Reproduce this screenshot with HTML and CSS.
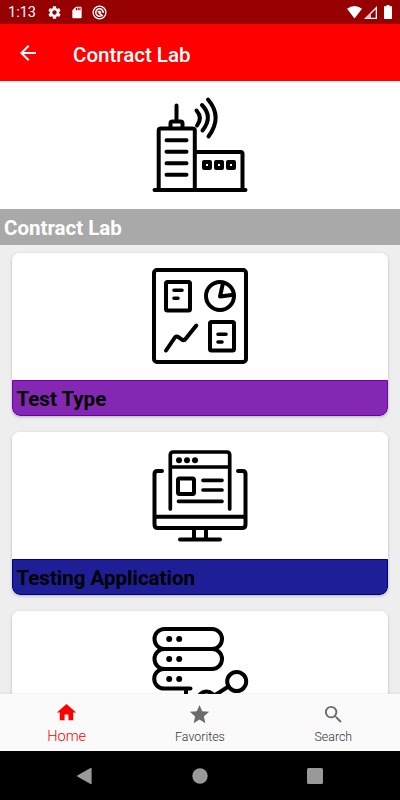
FILE: index.html
```html
<!DOCTYPE html>
<html lang="en">
<head>
    <meta charset="UTF-8">
    <meta name="viewport" content="width=device-width, initial-scale=1.0">
    <title>Contract Lab</title>
    <link rel="stylesheet" href="styles.css">
</head>
<body>
    <div class="phone">
        <!-- Status bar -->
        <div class="status-bar">
            <span class="clock">1:13</span>
            <svg class="status-icon gear" viewBox="0 0 24 24"><path d="M19.4 13a7.500 7.500 0 0 0 0-2l2.100-1.650c.2-.15.25-.42.12-.64l-2-3.460c-.12-.22-.38-.3-.6-.22l-2.500 1a7.300 7.300 0 0 0-1.700-.98l-.38-2.650A.5.5 0 0 0 14 2h-4a.5.5 0 0 0-.5.42l-.37 2.650c-.6.25-1.170.58-1.700.98l-2.480-1a.5.5 0 0 0-.6.22l-2 3.460c-.13.22-.07.5.12.64L4.570 11a7.900 7.900 0 0 0 0 2l-2.100 1.650c-.2.15-.25.42-.12.64l2 3.460c.12.22.38.3.6.22l2.500-1c.52.4 1.080.73 1.700.98l.37 2.650c.04.24.25.4.5.4h4c.24 0 .45-.16.48-.4l.38-2.650c.6-.25 1.170-.58 1.700-.98l2.480 1c.23.08.5 0 .6-.22l2-3.460a.5.5 0 0 0-.12-.64zM12 15.500a3.500 3.500 0 1 1 0-7 3.500 3.500 0 0 1 0 7z"/></svg>
            <svg class="status-icon card-icon" viewBox="0 0 24 24"><path d="M18 2h-8L4 8v12c0 1.100.9 2 2 2h12c1.100 0 2-.9 2-2V4c0-1.100-.9-2-2-2zm-6 6h-2V4h2zm3 0h-2V4h2zm3 0h-2V4h2z"/></svg>
            <svg class="status-icon swirl" viewBox="0 0 16 16"><g fill="none" stroke="#fff"><circle cx="8" cy="8" r="6.800" stroke-width="1.400"/><path stroke-width="1.600" d="M10.500 11.200A4 4 0 1 1 12 8.500M11.500 11.500 7.200 8.300M6 7.500q2-1.500 3.600.8"/></g></svg>
            <span class="spacer"></span>
            <svg class="wifi" viewBox="0 0 15 13"><path d="M0 2.700Q7.500-2.700 15 2.700L7.500 12.500z"/></svg>
            <svg class="signal" viewBox="0 0 13 13"><path fill-rule="evenodd" d="M0 13 13 0v13zM7 11.700h4.700V3.300L7 8z"/><path d="M1.500 12.300 7 6.800v5.500z" fill="#960000" opacity=".25"/></svg>
            <svg class="battery" viewBox="0 0 8 14"><path d="M2.500 0h3v1.300H8V14H0V1.300h2.500z"/></svg>
        </div>

        <!-- App bar -->
        <header class="app-bar">
            <svg class="back" viewBox="0 0 24 24"><path d="M20 11H7.830l5.590-5.590L12 4l-8 8 8 8 1.410-1.410L7.830 13H20z"/></svg>
            <h1 class="app-title">Contract Lab</h1>
        </header>

        <main class="content">
            <section class="hero">
                <div class="picture">
                    <svg class="art" viewBox="0 0 120 120">
                        <path d="M14.500 105h91M18.700 105V45.500q0-2 2-2h31.800q2.300 0 2.300 2V105M56 67h44.500q2 0 2 2v36M30.500 43V38.500q0-2 2-2h8q2 0 2 2V43M36.500 35V20.500"/>
                        <path d="M26.500 55.200h20M26.500 66.700h20M26.500 78.200h20M26.500 89.700h20"/>
                        <path d="M64 77h6v6h-6zM76 77h6v6h-6zM88 77h6v6h-6z"/>
                        <path d="M56.500 25.500q6.500 7.500 .5 15M62 20q11.500 12 .5 25.500M68 14.500q15 17.500 .5 37"/>
                    </svg>
                </div>
                <h2 class="label label-gray">Contract Lab</h2>
            </section>

            <div class="card">
                <div class="picture">
                    <svg class="art" viewBox="0 1 120 120">
                        <rect x="14" y="15" width="92" height="92" rx="3"/>
                        <rect x="26" y="27" width="24" height="28.500" rx="1.500"/>
                        <path d="M34 35.200h8M34 43.200h4" stroke-width="3.600"/>
                        <circle cx="80" cy="41" r="14"/>
                        <path d="M83 28 80 41.500l13.500-1.800"/>
                        <path d="M26 95.500 34.500 83q1.700-2.500 4-.8l3.200 2.300q2.300 1.500 4-.8L56.300 70.500"/>
                        <rect x="70" y="67" width="24" height="28.500" rx="1.500"/>
                        <path d="M78 79.200h8M78 87h4" stroke-width="3.600"/>
                    </svg>
                </div>
                <h2 class="label label-purple">Test Type</h2>
            </div>

            <div class="card">
                <div class="picture">
                    <svg class="art" viewBox="0 -4 120 120">
                        <path d="M22 31h-4.500q-3 0-3 3v50.500q0 3.500 3.500 3.500h84q3.500 0 3.500-3.500V34q0-3-3-3H98M14.500 76.700h91M54 89v9.500M66 89v9.500M40 99.500h40"/>
                        <path d="M30.300 69V15q0-3 3-3h53.400q3 0 3 3v54M31 27h58M38.500 61.300h43.500M63 40.300h19M63 50h19" stroke-width="3.700"/>
                        <rect x="38" y="38.500" width="16" height="15.500" rx="1.500"/>
                        <g class="dots"><circle cx="39" cy="20.200" r="3"/><circle cx="47" cy="20.200" r="3"/><circle cx="55" cy="20.200" r="3"/></g>
                    </svg>
                </div>
                <h2 class="label label-blue">Testing Application</h2>
            </div>

            <div class="card">
                <div class="picture">
                    <svg class="art" viewBox="0 5 120 120">
                        <rect x="14.500" y="19" width="67.500" height="20" rx="10"/>
                        <rect x="14.500" y="39" width="67.500" height="20" rx="10"/>
                        <path d="M24 59a9.800 9.800 0 0 0 0 19.600h26.500M46 79v12"/>
                        <circle cx="96.700" cy="71.500" r="9.500"/>
                        <circle cx="66.500" cy="90" r="8.500"/>
                        <path d="M88.500 76.500 76 84.500"/>
                        <g class="dots"><circle cx="29.200" cy="29" r="3"/><circle cx="39.200" cy="29" r="3"/><circle cx="29.200" cy="49" r="3"/><circle cx="39.200" cy="49" r="3"/><circle cx="29.200" cy="69" r="3"/><circle cx="39.200" cy="69" r="3"/></g>
                    </svg>
                </div>
            </div>
        </main>

        <!-- Bottom tabs -->
        <nav class="tabs">
            <a class="tab active">
                <svg class="tab-icon" viewBox="0 0 24 24"><path d="M10 20v-6h4v6h5v-8h3L12 3 2 12h3v8z"/></svg>
                <span>Home</span>
            </a>
            <a class="tab">
                <svg class="tab-icon" viewBox="0 0 24 24"><path d="M12 17.270 18.180 21l-1.640-7.030L22 9.240l-7.190-.61L12 2 9.190 8.630 2 9.240l5.460 4.730L5.820 21z"/></svg>
                <span>Favorites</span>
            </a>
            <a class="tab">
                <svg class="tab-icon" viewBox="0 0 24 24"><path d="M15.500 14h-.79l-.28-.27A6.470 6.470 0 0 0 16 9.500 6.500 6.500 0 1 0 9.500 16c1.610 0 3.090-.59 4.230-1.570l.27.28v.79l5 4.990L20.490 19zm-6 0a4.500 4.500 0 1 1 0-9 4.500 4.500 0 0 1 0 9z"/></svg>
                <span>Search</span>
            </a>
        </nav>

        <!-- System navigation -->
        <div class="system-nav">
            <svg class="sys-icon" viewBox="0 0 18 18"><path d="M15.600 1.500v15q0 1-1 .5L1.200 9.500q-.8-.5 0-1L14.600 1q1-.5 1 .5z"/></svg>
            <svg class="sys-icon" viewBox="0 0 18 18"><circle cx="9" cy="9" r="7.700"/></svg>
            <svg class="sys-icon" viewBox="0 0 18 18"><rect x="1" y="1" width="16" height="16" rx="1.500"/></svg>
        </div>
    </div>
</body>
</html>
```
FILE: styles.css
```css
* {
    margin: 0;
    padding: 0;
    box-sizing: border-box;
}

body {
    background-color: #eeeeee;
    font-family: Roboto, sans-serif;
    overflow: hidden;
}

svg {
    display: block;
    flex: none;
}

.phone {
    width: 400px;
    height: 800px;
    display: flex;
    flex-direction: column;
}

.status-bar {
    height: 24px;
    flex: none;
    display: flex;
    align-items: center;
    padding: 0 8px;
    background-color: #960000;
    color: #ffffff;
    fill: #ffffff;
}

.clock {
    width: 39px;
    font-size: 14.5px;
    line-height: 24px;
    padding-top: 1px;
}

.status-icon {
    width: 15px;
    height: 15px;
}

.card-icon {
    width: 14px;
    margin-left: 8px;
}

.swirl {
    margin-left: 8px;
}

.spacer {
    flex: 1;
}

.wifi {
    width: 15px;
    height: 13px;
}

.signal {
    width: 13px;
    height: 13px;
    margin-left: 2px;
}

.battery {
    width: 8px;
    height: 14px;
    margin-left: 7px;
}

.app-bar {
    height: 57px;
    flex: none;
    display: flex;
    align-items: center;
    padding-left: 16px;
    background-color: #ff0000;
    color: #ffffff;
}

.back {
    width: 24px;
    height: 24px;
    fill: #ffffff;
}

.app-title {
    margin-left: 33px;
    padding-top: 4px;
    font-size: 20.5px;
    font-weight: 500;
}

.content {
    flex: 1;
    min-height: 0;
    overflow: hidden;
}

.picture {
    height: 127px;
    display: flex;
    justify-content: center;
    align-items: center;
    background-color: #ffffff;
}

.art {
    width: 120px;
    height: 120px;
    fill: none;
    stroke: #000000;
    stroke-width: 4;
    stroke-linecap: round;
    stroke-linejoin: round;
}

.dots {
    fill: #000000;
    stroke: none;
}

.label {
    height: 36px;
    padding: 2px 4px 0;
    font-size: 20.5px;
    font-weight: 700;
    line-height: 35px;
}

.label-gray {
    height: 35.5px;
    background-color: #a9a9a9;
    color: #ffffff;
}

.label-purple {
    background-color: #8428b4;
    border: 1px solid #6a00a8;
}

.label-blue {
    background-color: #1e1e96;
    border: 1px solid #00008b;
}

.hero .picture {
    height: 128px;
}

.card {
    margin: 8.3px 12px 16.3px;
    border-radius: 8px;
    overflow: hidden;
    background-color: #ffffff;
    box-shadow: 0 1px 3px rgba(0, 0, 0, 0.25);
}

.card .label {
    padding: 1px 3.5px 0;
    border-radius: 0 0 8px 8px;
}

.tabs {
    height: 57px;
    flex: none;
    display: flex;
    background-color: #fafafa;
    box-shadow: 0 -1px 2px rgba(0, 0, 0, 0.06);
    position: relative;
}

.tab {
    flex: 1;
    display: flex;
    flex-direction: column;
    align-items: center;
    padding-top: 9px;
    font-size: 12.4px;
    font-weight: 300;
    line-height: 16px;
    color: #333333;
}

.tab-icon {
    width: 23px;
    height: 23px;
    margin-bottom: 3px;
    fill: #6b6b6b;
}

.active {
    padding-top: 7px;
    font-size: 14.6px;
    color: #ff0000;
}

.active .tab-icon {
    fill: #ff0000;
    margin-bottom: 4px;
}

.system-nav {
    height: 49px;
    flex: none;
    display: flex;
    justify-content: center;
    align-items: center;
    gap: 97px;
    background-color: #000000;
    fill: #999999;
}

.sys-icon {
    width: 18px;
    height: 18px;
}
```
